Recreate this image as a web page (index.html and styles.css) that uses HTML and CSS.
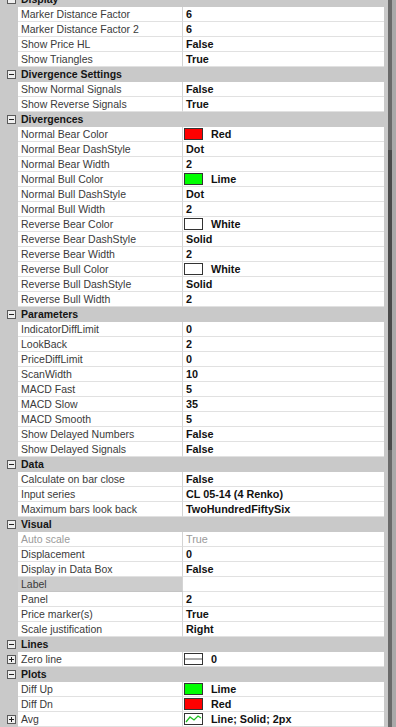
FILE: index.html
```html
<!DOCTYPE html>
<html>
<head>
<meta charset="utf-8">
<link rel="stylesheet" href="styles.css">
</head>
<body>
<div class="panel">
  <div class="grid">
    <div class="hdr"><div class="gut"><svg class="tog" width="9" height="9"><rect x=".5" y=".5" width="8" height="8" fill="#efefef" stroke="#5a5a5a"/><path d="M2 4.5h5" stroke="#222"/></svg></div><div class="htxt">Display</div></div>
    <div class="row"><div class="gut"></div><div class="name">Marker Distance Factor</div><div class="val">6</div></div>
    <div class="row"><div class="gut"></div><div class="name">Marker Distance Factor 2</div><div class="val">6</div></div>
    <div class="row"><div class="gut"></div><div class="name">Show Price HL</div><div class="val">False</div></div>
    <div class="row"><div class="gut"></div><div class="name">Show Triangles</div><div class="val">True</div></div>

    <div class="hdr"><div class="gut"><svg class="tog" width="9" height="9"><rect x=".5" y=".5" width="8" height="8" fill="#efefef" stroke="#5a5a5a"/><path d="M2 4.5h5" stroke="#222"/></svg></div><div class="htxt">Divergence Settings</div></div>
    <div class="row"><div class="gut"></div><div class="name">Show Normal Signals</div><div class="val">False</div></div>
    <div class="row"><div class="gut"></div><div class="name">Show Reverse Signals</div><div class="val">True</div></div>

    <div class="hdr"><div class="gut"><svg class="tog" width="9" height="9"><rect x=".5" y=".5" width="8" height="8" fill="#efefef" stroke="#5a5a5a"/><path d="M2 4.5h5" stroke="#222"/></svg></div><div class="htxt">Divergences</div></div>
    <div class="row"><div class="gut"></div><div class="name">Normal Bear Color</div><div class="val"><span class="sw red"></span>Red</div></div>
    <div class="row"><div class="gut"></div><div class="name">Normal Bear DashStyle</div><div class="val">Dot</div></div>
    <div class="row"><div class="gut"></div><div class="name">Normal Bear Width</div><div class="val">2</div></div>
    <div class="row"><div class="gut"></div><div class="name">Normal Bull Color</div><div class="val"><span class="sw lime"></span>Lime</div></div>
    <div class="row"><div class="gut"></div><div class="name">Normal Bull DashStyle</div><div class="val">Dot</div></div>
    <div class="row"><div class="gut"></div><div class="name">Normal Bull Width</div><div class="val">2</div></div>
    <div class="row"><div class="gut"></div><div class="name">Reverse Bear Color</div><div class="val"><span class="sw white"></span>White</div></div>
    <div class="row"><div class="gut"></div><div class="name">Reverse Bear DashStyle</div><div class="val">Solid</div></div>
    <div class="row"><div class="gut"></div><div class="name">Reverse Bear Width</div><div class="val">2</div></div>
    <div class="row"><div class="gut"></div><div class="name">Reverse Bull Color</div><div class="val"><span class="sw white"></span>White</div></div>
    <div class="row"><div class="gut"></div><div class="name">Reverse Bull DashStyle</div><div class="val">Solid</div></div>
    <div class="row"><div class="gut"></div><div class="name">Reverse Bull Width</div><div class="val">2</div></div>

    <div class="hdr"><div class="gut"><svg class="tog" width="9" height="9"><rect x=".5" y=".5" width="8" height="8" fill="#efefef" stroke="#5a5a5a"/><path d="M2 4.5h5" stroke="#222"/></svg></div><div class="htxt">Parameters</div></div>
    <div class="row"><div class="gut"></div><div class="name">IndicatorDiffLimit</div><div class="val">0</div></div>
    <div class="row"><div class="gut"></div><div class="name">LookBack</div><div class="val">2</div></div>
    <div class="row"><div class="gut"></div><div class="name">PriceDiffLimit</div><div class="val">0</div></div>
    <div class="row"><div class="gut"></div><div class="name">ScanWidth</div><div class="val">10</div></div>
    <div class="row"><div class="gut"></div><div class="name">MACD Fast</div><div class="val">5</div></div>
    <div class="row"><div class="gut"></div><div class="name">MACD Slow</div><div class="val">35</div></div>
    <div class="row"><div class="gut"></div><div class="name">MACD Smooth</div><div class="val">5</div></div>
    <div class="row"><div class="gut"></div><div class="name">Show Delayed Numbers</div><div class="val">False</div></div>
    <div class="row"><div class="gut"></div><div class="name">Show Delayed Signals</div><div class="val">False</div></div>

    <div class="hdr"><div class="gut"><svg class="tog" width="9" height="9"><rect x=".5" y=".5" width="8" height="8" fill="#efefef" stroke="#5a5a5a"/><path d="M2 4.5h5" stroke="#222"/></svg></div><div class="htxt">Data</div></div>
    <div class="row"><div class="gut"></div><div class="name">Calculate on bar close</div><div class="val">False</div></div>
    <div class="row"><div class="gut"></div><div class="name">Input series</div><div class="val">CL 05-14 (4 Renko)</div></div>
    <div class="row"><div class="gut"></div><div class="name">Maximum bars look back</div><div class="val">TwoHundredFiftySix</div></div>

    <div class="hdr"><div class="gut"><svg class="tog" width="9" height="9"><rect x=".5" y=".5" width="8" height="8" fill="#efefef" stroke="#5a5a5a"/><path d="M2 4.5h5" stroke="#222"/></svg></div><div class="htxt">Visual</div></div>
    <div class="row"><div class="gut"></div><div class="name dis">Auto scale</div><div class="val dis">True</div></div>
    <div class="row"><div class="gut"></div><div class="name">Displacement</div><div class="val">0</div></div>
    <div class="row"><div class="gut"></div><div class="name">Display in Data Box</div><div class="val">False</div></div>
    <div class="row"><div class="gut"></div><div class="name sel">Label</div><div class="val"></div></div>
    <div class="row"><div class="gut"></div><div class="name">Panel</div><div class="val">2</div></div>
    <div class="row"><div class="gut"></div><div class="name">Price marker(s)</div><div class="val">True</div></div>
    <div class="row"><div class="gut"></div><div class="name">Scale justification</div><div class="val">Right</div></div>

    <div class="hdr"><div class="gut"><svg class="tog" width="9" height="9"><rect x=".5" y=".5" width="8" height="8" fill="#efefef" stroke="#5a5a5a"/><path d="M2 4.5h5" stroke="#222"/></svg></div><div class="htxt">Lines</div></div>
    <div class="row"><div class="gut"><svg class="tog" width="9" height="9"><rect x=".5" y=".5" width="8" height="8" fill="#efefef" stroke="#5a5a5a"/><path d="M2 4.5h5M4.5 2v5" stroke="#222"/></svg></div><div class="name">Zero line</div><div class="val"><svg class="swg" width="19" height="12"><rect x=".5" y=".5" width="18" height="11" fill="#fff" stroke="#333"/><path d="M1 6h17" stroke="#555"/></svg>0</div></div>

    <div class="hdr"><div class="gut"><svg class="tog" width="9" height="9"><rect x=".5" y=".5" width="8" height="8" fill="#efefef" stroke="#5a5a5a"/><path d="M2 4.5h5" stroke="#222"/></svg></div><div class="htxt">Plots</div></div>
    <div class="row"><div class="gut"></div><div class="name">Diff Up</div><div class="val"><span class="sw lime"></span>Lime</div></div>
    <div class="row"><div class="gut"></div><div class="name">Diff Dn</div><div class="val"><span class="sw red"></span>Red</div></div>
    <div class="row"><div class="gut"><svg class="tog" width="9" height="9"><rect x=".5" y=".5" width="8" height="8" fill="#efefef" stroke="#5a5a5a"/><path d="M2 4.5h5M4.5 2v5" stroke="#222"/></svg></div><div class="name">Avg</div><div class="val"><svg class="swg" width="19" height="12"><rect x=".5" y=".5" width="18" height="11" fill="#fff" stroke="#333"/><polyline points="2,9 6,4 10,7 14,3 17,5" fill="none" stroke="#22c022" stroke-width="1.3"/></svg>Line; Solid; 2px</div></div>
    <div class="row"><div class="gut"></div><div class="name"></div><div class="val"><span class="sw white"></span></div></div>
  </div>
  <div class="scroll"><div class="track"><div class="thumb"></div></div></div>
</div>
</body>
</html>
```
FILE: styles.css
```css
html, body {
  margin: 0;
  padding: 0;
  background: #c9c9c9;
}
.panel {
  display: flex;
  width: 396px;
  height: 727px;
  overflow: hidden;
  background: #c9c9c9;
}
.grid {
  width: 384px;
  margin-top: -8px;
  display: flex;
  flex-direction: column;
}
.row {
  display: grid;
  grid-template-columns: 18px 165px 1fr;
  height: 15px;
  flex: none;
}
.gut {
  background: #c9c9c9;
  display: flex;
  align-items: center;
  padding-left: 7px;
}
.tog {
  display: block;
}
.name {
  background: #fff;
  border-bottom: 1px solid #e1e1e1;
  border-right: 1px solid #d4d4d4;
  font: 10.5px/14px "Liberation Sans", Arial, sans-serif;
  color: #3a3a3a;
  padding-left: 3px;
  white-space: nowrap;
  overflow: hidden;
}
.name.sel {
  background: #cdcdcd;
  border-bottom-color: #c4c4c4;
}
.val {
  background: #fff;
  border-bottom: 1px solid #e1e1e1;
  font: bold 10.8px/14px "Liberation Sans", Arial, sans-serif;
  color: #111;
  padding-left: 3px;
  white-space: nowrap;
  overflow: hidden;
  display: flex;
  align-items: center;
}
.dis {
  color: #9a9a9a;
  font-weight: normal;
}
.hdr {
  display: grid;
  grid-template-columns: 18px 1fr;
  height: 15px;
  flex: none;
  background: #c9c9c9;
}
.htxt {
  font: bold 10.5px/15px "Liberation Sans", Arial, sans-serif;
  color: #151515;
  padding-left: 3px;
}
.sw {
  display: inline-block;
  width: 17px;
  height: 10px;
  border: 1px solid #333;
  margin: 0 8px 0 -2px;
  flex: none;
}
.swg {
  display: block;
  margin: 0 8px 0 -2px;
  flex: none;
}
.red { background: #ff0000; }
.lime { background: #00ff00; }
.white { background: #fff; }
.scroll {
  width: 12px;
  background: #c9c9c9;
  display: flex;
}
.track {
  margin-left: 4px;
  width: 4px;
  background: #6a6a6a;
  border-right: 4px solid #a9a9a9;
  display: flex;
  flex-direction: column;
}
.thumb {
  margin-top: 150px;
  height: 300px;
  background: #4a4a4a;
}
```
